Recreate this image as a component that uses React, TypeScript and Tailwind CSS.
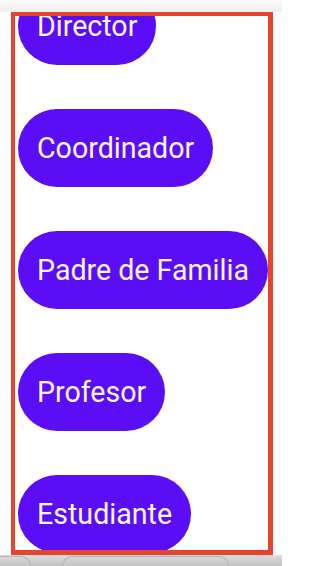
import React from "react";

const roles = ["Director", "Coordinador", "Padre de Familia", "Profesor", "Estudiante"];

export default function App() {
  return (
    <div
      className="w-[282px] h-[566px] bg-white overflow-hidden flex flex-col"
      style={{ fontFamily: "Roboto, 'Noto Sans', sans-serif" }}
    >
      <div className="h-[12px] shrink-0 bg-gradient-to-b from-[#fafafa] to-[#eeeeee]" />
      <div className="flex-1 flex pl-[11px] pr-[9px] min-h-0">
        <div className="flex-1 border-l-4 border-t-4 border-r-[5px] border-b-[5px] border-[#e8442b] overflow-hidden">
          <div className="flex flex-col items-start gap-[44px] mt-[-29px] pl-[3px]">
            {roles.map((r) => (
              <div
                key={r}
                className="h-[78px] shrink-0 flex items-center px-[19px] rounded-full bg-[#5b0ef5] text-[28.6px] leading-none text-[#f7f5ff] whitespace-nowrap"
              >
                {r}
              </div>
            ))}
          </div>
        </div>
      </div>
      <div className="h-[11px] shrink-0 bg-gradient-to-b from-[#dddddd] to-[#c2c2c2] flex items-start pt-[1px]">
        <div className="w-[31px] h-full rounded-tr-[12px] border-t border-r border-[#b4b4b4] bg-gradient-to-b from-[#d8d8d8] to-[#c4c4c4]" />
        <div className="w-[167px] h-full ml-[31px] rounded-t-[12px] border-t border-l border-r border-[#b4b4b4] bg-gradient-to-b from-[#d8d8d8] to-[#c4c4c4]" />
      </div>
    </div>
  );
}
